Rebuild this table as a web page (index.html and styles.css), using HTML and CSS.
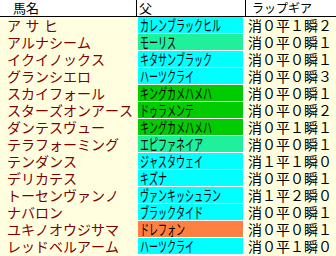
FILE: index.html
```html
<!DOCTYPE html>
<html lang="ja">
<head>
<meta charset="utf-8">
<link rel="stylesheet" href="styles.css">
</head>
<body>
<div class="table">
  <div class="head">
    <div class="h-name">馬名</div>
    <div class="h-sire">父</div>
    <div class="h-gear">ラップギア</div>
  </div>
  <div class="row"><div class="name spread">アサヒ</div><div class="sire cyan"><span>カレンブラックヒル</span></div><div class="gear">消０平１瞬２</div></div>
  <div class="row"><div class="name">アルナシーム</div><div class="sire spring"><span>モーリス</span></div><div class="gear">消０平０瞬１</div></div>
  <div class="row"><div class="name">イクイノックス</div><div class="sire cyan"><span>キタサンブラック</span></div><div class="gear">消０平０瞬１</div></div>
  <div class="row"><div class="name">グランシエロ</div><div class="sire cyan"><span>ハーツクライ</span></div><div class="gear">消０平０瞬３</div></div>
  <div class="row"><div class="name">スカイフォール</div><div class="sire green"><span>キングカメハメハ</span></div><div class="gear">消０平０瞬１</div></div>
  <div class="row"><div class="name">スターズオンアース</div><div class="sire green"><span>ドゥラメンテ</span></div><div class="gear">消０平０瞬２</div></div>
  <div class="row"><div class="name">ダンテスヴュー</div><div class="sire green"><span>キングカメハメハ</span></div><div class="gear">消０平１瞬１</div></div>
  <div class="row"><div class="name">テラフォーミング</div><div class="sire spring"><span>エピファネイア</span></div><div class="gear">消０平０瞬１</div></div>
  <div class="row"><div class="name">テンダンス</div><div class="sire cyan"><span>ジャスタウェイ</span></div><div class="gear">消１平１瞬０</div></div>
  <div class="row"><div class="name">デリカテス</div><div class="sire cyan"><span>キズナ</span></div><div class="gear">消０平０瞬１</div></div>
  <div class="row"><div class="name">トーセンヴァンノ</div><div class="sire cyan"><span>ヴァンキッシュラン</span></div><div class="gear">消１平２瞬０</div></div>
  <div class="row"><div class="name">ナバロン</div><div class="sire cyan"><span>ブラックタイド</span></div><div class="gear">消０平０瞬１</div></div>
  <div class="row"><div class="name">ユキノオウジサマ</div><div class="sire orange"><span>ドレフォン</span></div><div class="gear">消０平０瞬１</div></div>
  <div class="row"><div class="name">レッドベルアーム</div><div class="sire cyan"><span>ハーツクライ</span></div><div class="gear">消０平１瞬０</div></div>
</div>
</body>
</html>
```
FILE: styles.css
```css
html, body {
  margin: 0;
  padding: 0;
  background: #ffffe0;
}
body {
  font-family: "Noto Sans CJK JP", "Noto Sans", sans-serif;
  font-kerning: none;
  font-feature-settings: "kern" 0, "palt" 0;
  width: 336px;
  height: 256px;
  overflow: hidden;
}
.table {
  display: flex;
  flex-direction: column;
}
.head {
  display: grid;
  grid-template-columns: 137px 109px 1fr;
  height: 16px;
  background: #ffffff;
  border-bottom: 1px solid #000;
  font-size: 13px;
  line-height: 16px;
  color: #000;
}
.h-name {
  padding-left: 13px;
  border-right: 1px solid #000;
}
.h-sire {
  padding-left: 2px;
  border-right: 1px solid #000;
}
.h-gear {
  padding-left: 6px;
  font-size: 12px;
}
.row {
  display: grid;
  grid-template-columns: 138px 108px 1fr;
  height: 17px;
}
.name {
  padding-left: 7px;
  font-size: 14px;
  line-height: 16px;
  color: #800000;
  white-space: nowrap;
}
.spread {
  letter-spacing: 4.5px;
}
.sire {
  margin-right: 1px;
  border-right: 2px solid #fff;
  border-bottom: 1px solid #fff;
  padding-left: 2px;
  font-size: 15px;
  line-height: 16px;
  color: #000;
  white-space: nowrap;
  overflow: hidden;
}
.sire span {
  display: inline-block;
  transform: scaleX(0.6);
  transform-origin: left center;
}
.cyan { background: #00ffff; }
.spring { background: #1ef09c; }
.green { background: #00cc00; }
.orange { background: #ff8040; }
.gear {
  padding-left: 2px;
  font-size: 14px;
  line-height: 16px;
  color: #000;
  white-space: nowrap;
}
```
